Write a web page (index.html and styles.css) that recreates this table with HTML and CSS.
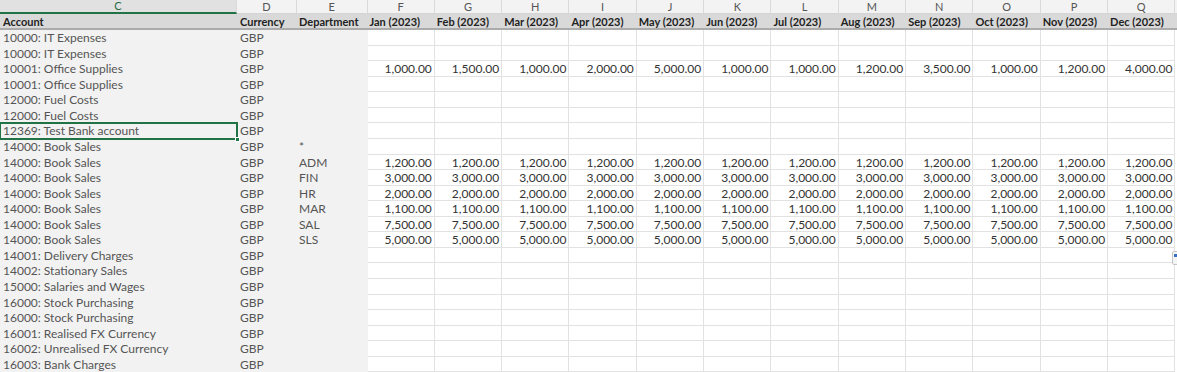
FILE: index.html
```html
<!DOCTYPE html>
<html>
<head>
<meta charset="utf-8">
<link rel="stylesheet" href="styles.css">
</head>
<body>
<div class="sheet">
  <div class="colhdr">
    <div class="ch sel">C</div><div class="ch">D</div><div class="ch">E</div><div class="ch">F</div><div class="ch">G</div><div class="ch">H</div><div class="ch">I</div><div class="ch">J</div><div class="ch">K</div><div class="ch">L</div><div class="ch">M</div><div class="ch">N</div><div class="ch">O</div><div class="ch">P</div><div class="ch">Q</div>
  </div>
  <div class="row head">
    <div class="c">Account</div><div class="d">Currency</div><div class="e">Department</div><div class="n">Jan (2023)</div><div class="n">Feb (2023)</div><div class="n">Mar (2023)</div><div class="n">Apr (2023)</div><div class="n">May (2023)</div><div class="n">Jun (2023)</div><div class="n">Jul (2023)</div><div class="n">Aug (2023)</div><div class="n">Sep (2023)</div><div class="n">Oct (2023)</div><div class="n">Nov (2023)</div><div class="n">Dec (2023)</div>
  </div>
  <div class="row"><div class="c">10000: IT Expenses</div><div class="d">GBP</div><div class="e"></div><div class="n"></div><div class="n"></div><div class="n"></div><div class="n"></div><div class="n"></div><div class="n"></div><div class="n"></div><div class="n"></div><div class="n"></div><div class="n"></div><div class="n"></div><div class="n"></div></div>
  <div class="row"><div class="c">10000: IT Expenses</div><div class="d">GBP</div><div class="e"></div><div class="n"></div><div class="n"></div><div class="n"></div><div class="n"></div><div class="n"></div><div class="n"></div><div class="n"></div><div class="n"></div><div class="n"></div><div class="n"></div><div class="n"></div><div class="n"></div></div>
  <div class="row"><div class="c">10001: Office Supplies</div><div class="d">GBP</div><div class="e"></div><div class="n">1,000.00</div><div class="n">1,500.00</div><div class="n">1,000.00</div><div class="n">2,000.00</div><div class="n">5,000.00</div><div class="n">1,000.00</div><div class="n">1,000.00</div><div class="n">1,200.00</div><div class="n">3,500.00</div><div class="n">1,000.00</div><div class="n">1,200.00</div><div class="n">4,000.00</div></div>
  <div class="row"><div class="c">10001: Office Supplies</div><div class="d">GBP</div><div class="e"></div><div class="n"></div><div class="n"></div><div class="n"></div><div class="n"></div><div class="n"></div><div class="n"></div><div class="n"></div><div class="n"></div><div class="n"></div><div class="n"></div><div class="n"></div><div class="n"></div></div>
  <div class="row"><div class="c">12000: Fuel Costs</div><div class="d">GBP</div><div class="e"></div><div class="n"></div><div class="n"></div><div class="n"></div><div class="n"></div><div class="n"></div><div class="n"></div><div class="n"></div><div class="n"></div><div class="n"></div><div class="n"></div><div class="n"></div><div class="n"></div></div>
  <div class="row"><div class="c">12000: Fuel Costs</div><div class="d">GBP</div><div class="e"></div><div class="n"></div><div class="n"></div><div class="n"></div><div class="n"></div><div class="n"></div><div class="n"></div><div class="n"></div><div class="n"></div><div class="n"></div><div class="n"></div><div class="n"></div><div class="n"></div></div>
  <div class="row"><div class="c active">12369: Test Bank account<span class="handle"></span></div><div class="d">GBP</div><div class="e"></div><div class="n"></div><div class="n"></div><div class="n"></div><div class="n"></div><div class="n"></div><div class="n"></div><div class="n"></div><div class="n"></div><div class="n"></div><div class="n"></div><div class="n"></div><div class="n"></div></div>
  <div class="row"><div class="c">14000: Book Sales</div><div class="d">GBP</div><div class="e">*</div><div class="n"></div><div class="n"></div><div class="n"></div><div class="n"></div><div class="n"></div><div class="n"></div><div class="n"></div><div class="n"></div><div class="n"></div><div class="n"></div><div class="n"></div><div class="n"></div></div>
  <div class="row"><div class="c">14000: Book Sales</div><div class="d">GBP</div><div class="e">ADM</div><div class="n">1,200.00</div><div class="n">1,200.00</div><div class="n">1,200.00</div><div class="n">1,200.00</div><div class="n">1,200.00</div><div class="n">1,200.00</div><div class="n">1,200.00</div><div class="n">1,200.00</div><div class="n">1,200.00</div><div class="n">1,200.00</div><div class="n">1,200.00</div><div class="n">1,200.00</div></div>
  <div class="row"><div class="c">14000: Book Sales</div><div class="d">GBP</div><div class="e">FIN</div><div class="n">3,000.00</div><div class="n">3,000.00</div><div class="n">3,000.00</div><div class="n">3,000.00</div><div class="n">3,000.00</div><div class="n">3,000.00</div><div class="n">3,000.00</div><div class="n">3,000.00</div><div class="n">3,000.00</div><div class="n">3,000.00</div><div class="n">3,000.00</div><div class="n">3,000.00</div></div>
  <div class="row"><div class="c">14000: Book Sales</div><div class="d">GBP</div><div class="e">HR</div><div class="n">2,000.00</div><div class="n">2,000.00</div><div class="n">2,000.00</div><div class="n">2,000.00</div><div class="n">2,000.00</div><div class="n">2,000.00</div><div class="n">2,000.00</div><div class="n">2,000.00</div><div class="n">2,000.00</div><div class="n">2,000.00</div><div class="n">2,000.00</div><div class="n">2,000.00</div></div>
  <div class="row"><div class="c">14000: Book Sales</div><div class="d">GBP</div><div class="e">MAR</div><div class="n">1,100.00</div><div class="n">1,100.00</div><div class="n">1,100.00</div><div class="n">1,100.00</div><div class="n">1,100.00</div><div class="n">1,100.00</div><div class="n">1,100.00</div><div class="n">1,100.00</div><div class="n">1,100.00</div><div class="n">1,100.00</div><div class="n">1,100.00</div><div class="n">1,100.00</div></div>
  <div class="row"><div class="c">14000: Book Sales</div><div class="d">GBP</div><div class="e">SAL</div><div class="n">7,500.00</div><div class="n">7,500.00</div><div class="n">7,500.00</div><div class="n">7,500.00</div><div class="n">7,500.00</div><div class="n">7,500.00</div><div class="n">7,500.00</div><div class="n">7,500.00</div><div class="n">7,500.00</div><div class="n">7,500.00</div><div class="n">7,500.00</div><div class="n">7,500.00</div></div>
  <div class="row"><div class="c">14000: Book Sales</div><div class="d">GBP</div><div class="e">SLS</div><div class="n">5,000.00</div><div class="n">5,000.00</div><div class="n">5,000.00</div><div class="n">5,000.00</div><div class="n">5,000.00</div><div class="n">5,000.00</div><div class="n">5,000.00</div><div class="n">5,000.00</div><div class="n">5,000.00</div><div class="n">5,000.00</div><div class="n">5,000.00</div><div class="n">5,000.00</div></div>
  <div class="row"><div class="c">14001: Delivery Charges</div><div class="d">GBP</div><div class="e"></div><div class="n"></div><div class="n"></div><div class="n"></div><div class="n"></div><div class="n"></div><div class="n"></div><div class="n"></div><div class="n"></div><div class="n"></div><div class="n"></div><div class="n"></div><div class="n"></div></div>
  <div class="row"><div class="c">14002: Stationary Sales</div><div class="d">GBP</div><div class="e"></div><div class="n"></div><div class="n"></div><div class="n"></div><div class="n"></div><div class="n"></div><div class="n"></div><div class="n"></div><div class="n"></div><div class="n"></div><div class="n"></div><div class="n"></div><div class="n"></div></div>
  <div class="row"><div class="c">15000: Salaries and Wages</div><div class="d">GBP</div><div class="e"></div><div class="n"></div><div class="n"></div><div class="n"></div><div class="n"></div><div class="n"></div><div class="n"></div><div class="n"></div><div class="n"></div><div class="n"></div><div class="n"></div><div class="n"></div><div class="n"></div></div>
  <div class="row"><div class="c">16000: Stock Purchasing</div><div class="d">GBP</div><div class="e"></div><div class="n"></div><div class="n"></div><div class="n"></div><div class="n"></div><div class="n"></div><div class="n"></div><div class="n"></div><div class="n"></div><div class="n"></div><div class="n"></div><div class="n"></div><div class="n"></div></div>
  <div class="row"><div class="c">16000: Stock Purchasing</div><div class="d">GBP</div><div class="e"></div><div class="n"></div><div class="n"></div><div class="n"></div><div class="n"></div><div class="n"></div><div class="n"></div><div class="n"></div><div class="n"></div><div class="n"></div><div class="n"></div><div class="n"></div><div class="n"></div></div>
  <div class="row"><div class="c">16001: Realised FX Currency</div><div class="d">GBP</div><div class="e"></div><div class="n"></div><div class="n"></div><div class="n"></div><div class="n"></div><div class="n"></div><div class="n"></div><div class="n"></div><div class="n"></div><div class="n"></div><div class="n"></div><div class="n"></div><div class="n"></div></div>
  <div class="row"><div class="c">16002: Unrealised FX Currency</div><div class="d">GBP</div><div class="e"></div><div class="n"></div><div class="n"></div><div class="n"></div><div class="n"></div><div class="n"></div><div class="n"></div><div class="n"></div><div class="n"></div><div class="n"></div><div class="n"></div><div class="n"></div><div class="n"></div></div>
  <div class="row"><div class="c">16003: Bank Charges</div><div class="d">GBP</div><div class="e"></div><div class="n"></div><div class="n"></div><div class="n"></div><div class="n"></div><div class="n"></div><div class="n"></div><div class="n"></div><div class="n"></div><div class="n"></div><div class="n"></div><div class="n"></div><div class="n"></div></div>
  <div class="qa"></div>
</div>
</body>
</html>
```

FILE: styles.css
```css
* { box-sizing: border-box; }
html, body { margin: 0; padding: 0; background: #fff; }
body {
  font-family: Lato, "Open Sans", sans-serif;
  font-size: 12px;
  overflow: hidden;
}
.sheet {
  --cols: 237px 60px 70.5px repeat(12, 67.33px) 1fr;
  position: relative;
  width: 1177px;
  height: 372px;
  overflow: hidden;
}
.colhdr {
  display: grid;
  grid-template-columns: var(--cols);
  height: 14px;
  background: #f3f3f3;
  border-bottom: 1px solid #d4d4d4;
}
.ch {
  text-align: center;
  color: #555;
  font-size: 11px;
  line-height: 13px;
  border-right: 1px solid #dadada;
}
.ch.sel {
  color: #1e6e42;
  border-bottom: 2px solid #217346;
  background: #e1e1e1;
  line-height: 12px;
}
.row {
  display: grid;
  grid-template-columns: var(--cols);
  height: 15.57px;
  line-height: 15.57px;
  white-space: nowrap;
}
.row.head {
  height: 16px;
  line-height: 15px;
  background: #d9d9d9;
  border-bottom: 2px solid #ababab;
  font-weight: 700;
  font-size: 11px;
  color: #222;
}
.row.head > div { background: transparent; border: 0; text-align: left; padding: 0 0 0 2px; color: #222; }
.row.head .c, .row.head .d { padding-left: 3px; }
.c, .d, .e {
  background: #f2f2f2;
  color: #555;
  padding-left: 3px;
  position: relative;
}
.e { padding-left: 2px; }
.n {
  border-right: 1px solid #e2e2e2;
  border-bottom: 1px solid #e2e2e2;
  text-align: right;
  padding-right: 2px;
  color: #333;
  overflow: hidden;
}
.c.active {
  outline: 2px solid #217346;
  outline-offset: -1px;
  z-index: 1;
}
.handle {
  position: absolute;
  right: -3px;
  bottom: -3px;
  width: 5px;
  height: 5px;
  background: #217346;
  border: 1px solid #fff;
}
.qa {
  position: absolute;
  left: 1172px;
  top: 251px;
  width: 8px;
  height: 14px;
  background: #f4f4f4;
  border: 1px solid #c6c6c6;
  border-radius: 2px;
}
.qa::before {
  content: "";
  position: absolute;
  left: 1px;
  top: 2px;
  width: 4px;
  height: 3px;
  background: #3b6fc4;
}
```
